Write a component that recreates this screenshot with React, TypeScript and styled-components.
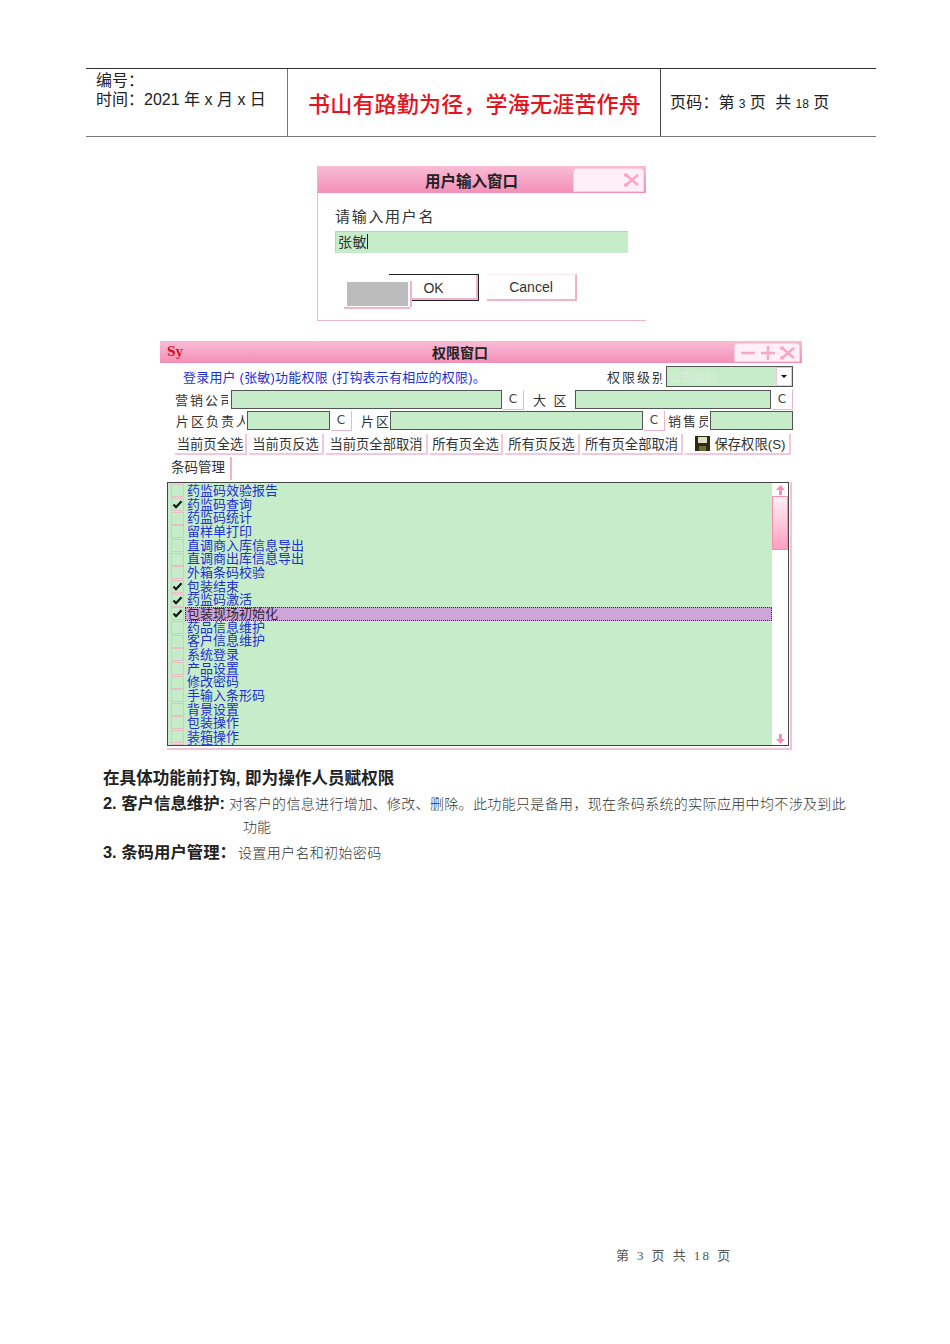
import React from 'react';
import styled, { createGlobalStyle } from 'styled-components';

const GlobalStyle = createGlobalStyle`
  html, body { margin: 0; padding: 0; background: #fff; }
  body { font-family: "Liberation Sans", "Noto Sans CJK SC", sans-serif; }
`;

const PINK = '#efb4cc';
const GREEN = '#c7ecc9';

const Page = styled.div`
  width: 950px;
  height: 1344px;
  box-sizing: border-box;
  padding-top: 68px;
  padding-bottom: 80px;
  display: flex;
  flex-direction: column;
  overflow: hidden;
`;

/* header table */
const HeaderTable = styled.header`
  margin-left: 86px;
  width: 790px;
  height: 69px;
  box-sizing: border-box;
  border-top: 1px solid #333;
  border-bottom: 1.5px solid #777;
  display: grid;
  grid-template-columns: 201px 374px 215px;
  color: #222;
  font-size: 16px;
`;

const HeaderLeft = styled.div`
  padding: 2px 0 0 10px;
  line-height: 19px;
`;

const HeaderMid = styled.div`
  border-left: 1px solid #777;
  border-right: 1px solid #444;
  padding: 21px 0 0 20px;
  color: #e5141c;
  font-size: 22px;
  letter-spacing: 0.2px;
  line-height: 30px;
  font-weight: 500;
  white-space: nowrap;
`;

const HeaderRight = styled.div`
  padding: 24px 0 0 9px;
  line-height: 20px;
  letter-spacing: 0.2px;
  white-space: nowrap;
`;

const Num = styled.span`
  font-size: 12px;
  margin: 0 4px;
`;

/* application windows */
const TitleBar = styled.div<{ $h: number; $size: number; $shift: number }>`
  height: ${(p) => p.$h}px;
  background: linear-gradient(#f8bcd5, #f48fb7);
  box-sizing: border-box;
  padding-right: ${(p) => p.$shift}px;
  display: flex;
  align-items: center;
  justify-content: center;
  position: relative;
  font-size: ${(p) => p.$size}px;
  font-weight: 700;
  color: #222;
`;

const WinButtons = styled.div<{ $w: number }>`
  position: absolute;
  right: 2px;
  top: 2px;
  bottom: 1px;
  width: ${(p) => p.$w}px;
  box-sizing: border-box;
  background: #fff0f7;
  border: 1px solid #f9cfe0;
  border-radius: 4px 4px 0 0;
  display: flex;
  align-items: center;
  justify-content: flex-end;
  gap: 4px;
  padding-right: 3px;
`;

const InputDialog = styled.section`
  margin: 29px 0 0 317px;
  width: 329px;
  height: 155px;
  box-sizing: border-box;
  border-left: 1px solid ${PINK};
  border-bottom: 1.5px solid ${PINK};
`;

const PromptLabel = styled.div`
  margin: 14px 0 0 17px;
  font-size: 15px;
  line-height: 20px;
  letter-spacing: 1.7px;
  color: #333;
`;

const NameInput = styled.div`
  margin: 4px 0 0 17px;
  width: 293px;
  height: 22px;
  box-sizing: border-box;
  background: ${GREEN};
  border-top: 1px solid ${PINK};
  border-left: 1px solid ${PINK};
  padding-left: 2px;
  font-size: 14px;
  letter-spacing: 0.6px;
  line-height: 21px;
  color: #333;
`;

const Caret = styled.span`
  display: inline-block;
  width: 1px;
  height: 15px;
  background: #222;
  vertical-align: -2px;
`;

const DialogButtons = styled.div`
  margin: 21px 0 0 71px;
  display: flex;
  gap: 8px;
  position: relative;
`;

const DialogButton = styled.div<{ $focus?: boolean }>`
  width: 90px;
  height: 27px;
  box-sizing: border-box;
  display: flex;
  align-items: center;
  justify-content: center;
  font-size: 14px;
  color: #333;
  background: #fff;
  border-right: ${(p) => (p.$focus ? '1.5px solid #222' : `2px solid ${PINK}`)};
  border-bottom: ${(p) => (p.$focus ? '1.5px solid #222' : `2px solid ${PINK}`)};
  border-top: ${(p) => (p.$focus ? '1.5px solid #222' : '1px solid #fbeaf1')};
  box-shadow: ${(p) => (p.$focus ? `inset -2px -2px 0 ${PINK}` : 'none')};
`;

const GreyBlock = styled.div`
  position: absolute;
  left: -45px;
  top: 7px;
  width: 66px;
  height: 26px;
  box-sizing: border-box;
  background: #bcbcbc;
  border-style: solid;
  border-color: #fff;
  border-width: 1px 2px 1px 3px;
  box-shadow: 0 2px 0 ${PINK}, 2px 0 0 ${PINK};
`;

const RightsWindow = styled.section`
  margin: 20px 0 0 160px;
  width: 642px;
  height: 409px;
  box-sizing: border-box;
  display: flex;
  flex-direction: column;
`;

const Logo = styled.span`
  position: absolute;
  left: 7px;
  top: 4px;
  font-family: "DejaVu Serif", serif;
  font-size: 12px;
  font-weight: 700;
  color: #d8142c;
`;

const FormRow = styled.div<{ $h: number; $pl: number }>`
  height: ${(p) => p.$h}px;
  padding-left: ${(p) => p.$pl}px;
  display: flex;
  align-items: center;
  flex: none;
`;

const Notice = styled.div`
  width: 432px;
  box-sizing: border-box;
  padding-left: 8px;
  color: #1c2fd6;
  font-size: 13px;
  letter-spacing: 0.2px;
  white-space: nowrap;
`;

const FieldLabel = styled.div<{ $w: number; $ml?: number }>`
  width: ${(p) => p.$w}px;
  margin-left: ${(p) => p.$ml ?? 0}px;
  flex: none;
  overflow: hidden;
  white-space: nowrap;
  font-size: 13px;
  letter-spacing: 2px;
  color: #333;
`;

const FieldInput = styled.div<{ $w: number; $ml?: number }>`
  width: ${(p) => p.$w}px;
  height: 19px;
  margin-left: ${(p) => p.$ml ?? 0}px;
  flex: none;
  box-sizing: border-box;
  background: ${GREEN};
  border: 1px solid #555;
`;

const ClearButton = styled.div`
  width: 21px;
  height: 20px;
  margin-left: 1px;
  flex: none;
  box-sizing: border-box;
  display: flex;
  align-items: center;
  justify-content: center;
  font-family: "DejaVu Sans", sans-serif;
  font-size: 12px;
  color: #444;
  border-right: 1px solid ${PINK};
  border-bottom: 1px solid ${PINK};
`;

const SelectBox = styled.div`
  width: 127px;
  height: 21px;
  margin-left: 4px;
  box-sizing: border-box;
  background: ${GREEN};
  border: 1px solid #555;
  display: flex;
  align-items: center;
  justify-content: space-between;
  font-size: 12px;
  color: #dcefdc;
  padding-left: 2px;
`;

const SelectArrow = styled.div`
  width: 16px;
  height: 19px;
  box-sizing: border-box;
  background: #fff;
  border: 1px solid #f3c4d8;
  display: flex;
  align-items: center;
  justify-content: center;
  &::after {
    content: '';
    border-left: 3px solid transparent;
    border-right: 3px solid transparent;
    border-top: 3px solid #111;
  }
`;

const ToolRow = styled.div`
  height: 21px;
  margin: 3px 0 0 15px;
  display: flex;
  gap: 2px;
  flex: none;
`;

const ToolButton = styled.div<{ $w: number; $pl?: number }>`
  width: ${(p) => p.$w}px;
  padding-left: ${(p) => p.$pl ?? 0}px;
  flex: none;
  box-sizing: border-box;
  display: flex;
  align-items: center;
  justify-content: center;
  gap: 5px;
  font-size: 13.3px;
  color: #333;
  white-space: nowrap;
  border-right: 2px solid #f3c8da;
  border-bottom: 2px solid #f3c8da;
`;

const Tab = styled.div`
  width: 63px;
  height: 23px;
  margin: 2px 0 0 9px;
  padding-left: 2px;
  box-sizing: border-box;
  flex: none;
  border-right: 2px solid ${PINK};
  font-size: 13.5px;
  line-height: 22px;
  color: #333;
`;

const ListFrame = styled.div`
  margin: 2px 0 0 7px;
  width: 625px;
  height: 268px;
  box-sizing: border-box;
  flex: none;
  border-right: 2px solid #f0c4d6;
  border-bottom: 2px solid #f0c4d6;
  padding: 0 1px 2px 0;
`;

const ListBox = styled.div`
  height: 100%;
  box-sizing: border-box;
  border: 1.5px solid #444;
  display: flex;
  overflow: hidden;
`;

const Items = styled.div`
  flex: 1;
  background: ${GREEN};
  padding-top: 1px;
  overflow: hidden;
`;

const Item = styled.div<{ $selected?: boolean }>`
  height: 13.67px;
  display: flex;
  align-items: center;
  padding-left: 3px;
  color: ${(p) => (p.$selected ? '#332233' : '#1c2fd6')};
  font-size: 13px;
  white-space: nowrap;
`;

const Check = styled.div`
  width: 13px;
  height: 13px;
  flex: none;
  box-sizing: border-box;
  border: 1px solid #e3bfc6;
  display: flex;
  align-items: center;
  justify-content: center;
`;

const ItemText = styled.div<{ $selected?: boolean }>`
  flex: 1;
  height: 13.67px;
  margin-left: 1px;
  padding-left: 2px;
  box-sizing: border-box;
  line-height: 13px;
  background: ${(p) => (p.$selected ? '#cda5d8' : 'transparent')};
  outline: ${(p) => (p.$selected ? '1px dotted #333' : 'none')};
  outline-offset: -1px;
`;

const ScrollBar = styled.div`
  width: 16px;
  flex: none;
  background: #fff;
  display: flex;
  flex-direction: column;
  align-items: center;
`;

const ScrollThumb = styled.div`
  width: 100%;
  height: 54px;
  flex: none;
  box-sizing: border-box;
  border: 1px solid #f78fb4;
  background: linear-gradient(#fff0f6, #ff9fc0);
`;

const ScrollGap = styled.div`
  flex: 1;
`;

const ArrowSlot = styled.div`
  height: 13px;
  display: flex;
  align-items: center;
  justify-content: center;
  flex: none;
`;

/* text under the screenshots */
const Notes = styled.div`
  margin: 18px 0 0 103px;
  color: #222;
`;

const NoteHead = styled.div`
  font-size: 16.6px;
  line-height: 22px;
  font-weight: 700;
  white-space: nowrap;
`;

const NoteRow = styled.div<{ $h: number; $mt: number }>`
  height: ${(p) => p.$h}px;
  margin-top: ${(p) => p.$mt}px;
  line-height: ${(p) => p.$h}px;
  white-space: nowrap;
`;

const NoteBold = styled.b<{ $w: number }>`
  display: inline-block;
  width: ${(p) => p.$w}px;
  font-size: 16.4px;
`;

const NoteText = styled.span`
  font-size: 14px;
  letter-spacing: 0.35px;
  font-weight: 300;
  color: #333;
`;

const NoteIndent = styled.div`
  padding-left: 140px;
  margin-top: 1px;
  height: 22px;
  line-height: 22px;
  font-size: 14px;
  font-weight: 300;
  color: #333;
`;

const Footer = styled.footer`
  margin-top: auto;
  margin-left: 616px;
  font-family: "Liberation Serif", "Noto Sans CJK SC", serif;
  font-size: 13px;
  line-height: 16px;
  letter-spacing: 2.4px;
  color: #555;
  white-space: nowrap;
`;

const CloseIcon = () => (
  <svg width="17" height="14" viewBox="0 0 17 14" fill="none" stroke="#f4a9c8" strokeWidth="2.8">
    <path d="M3 2 C7 5 10 8 15 12 M3 12 C7 9 10 6 15 2" />
    <path d="M1 2h4M1 12h4" strokeWidth="3" />
  </svg>
);

const PlusMinus = () => (
  <svg width="34" height="14" viewBox="0 0 34 14" fill="none" stroke="#f4a9c8" strokeWidth="2.6">
    <path d="M0 7h14M20 7h14M27 0v14" />
  </svg>
);

const ScrollArrow = ({ down }: { down?: boolean }) => (
  <svg width="9" height="10" viewBox="0 0 9 10" fill="#f58fb5">
    <path d={down ? 'M3 0h3v5h3L4.5 10 0 5h3z' : 'M4.5 0 9 5H6v5H3V5H0z'} />
  </svg>
);

const SaveIcon = () => (
  <svg width="15" height="15" viewBox="0 0 15 15">
    <rect width="15" height="15" fill="#2d2d16" />
    <rect x="3" y="1" width="9" height="6" fill="#dfe0c8" />
    <rect x="4" y="10" width="7" height="5" fill="#6d6d35" />
  </svg>
);

const CheckMark = () => (
  <svg width="11" height="9" viewBox="0 0 11 9" fill="none" stroke="#111" strokeWidth="2.2">
    <path d="M1.5 4.5 4 7.2 9.5 1.2" />
  </svg>
);

const rights: { name: string; checked?: boolean; selected?: boolean }[] = [
  { name: '药监码效验报告' },
  { name: '药监码查询', checked: true },
  { name: '药监码统计' },
  { name: '留样单打印' },
  { name: '直调商入库信息导出' },
  { name: '直调商出库信息导出' },
  { name: '外箱条码校验' },
  { name: '包装结束', checked: true },
  { name: '药监码激活', checked: true },
  { name: '包装现场初始化', checked: true, selected: true },
  { name: '药品信息维护' },
  { name: '客户信息维护' },
  { name: '系统登录' },
  { name: '产品设置' },
  { name: '修改密码' },
  { name: '手输入条形码' },
  { name: '背景设置' },
  { name: '包装操作' },
  { name: '装箱操作' },
  { name: '装箱结束' },
];

const tools = [
  { label: '当前页全选', w: 72 },
  { label: '当前页反选', w: 75 },
  { label: '当前页全部取消', w: 102 },
  { label: '所有页全选', w: 73 },
  { label: '所有页反选', w: 75 },
  { label: '所有页全部取消', w: 101 },
];

export default function App() {
  return (
    <Page>
      <GlobalStyle />
      <HeaderTable>
        <HeaderLeft>
          编号：
          <br />
          时间：2021 年 x 月 x 日
        </HeaderLeft>
        <HeaderMid>书山有路勤为径，学海无涯苦作舟</HeaderMid>
        <HeaderRight>
          页码：第<Num>3</Num>页&nbsp;&nbsp;共<Num>18</Num>页
        </HeaderRight>
      </HeaderTable>

      <InputDialog>
        <TitleBar $h={27} $size={15.5} $shift={21}>
          用户输入窗口
          <WinButtons $w={71}>
            <CloseIcon />
          </WinButtons>
        </TitleBar>
        <PromptLabel>请输入用户名</PromptLabel>
        <NameInput>
          张敏
          <Caret />
        </NameInput>
        <DialogButtons>
          <DialogButton $focus>OK</DialogButton>
          <DialogButton>Cancel</DialogButton>
          <GreyBlock />
        </DialogButtons>
      </InputDialog>

      <RightsWindow>
        <TitleBar $h={24} $size={14} $shift={42}>
          <Logo>Sy</Logo>
          权限窗口
          <WinButtons $w={66}>
            <PlusMinus />
            <CloseIcon />
          </WinButtons>
        </TitleBar>
        <FormRow $h={26} $pl={15}>
          <Notice>登录用户 (张敏)功能权限 (打钩表示有相应的权限)。</Notice>
          <FieldLabel $w={55}>权限级别</FieldLabel>
          <SelectBox>
            公司级别
            <SelectArrow />
          </SelectBox>
        </FormRow>
        <FormRow $h={21} $pl={15}>
          <FieldLabel $w={53}>营销公司</FieldLabel>
          <FieldInput $w={271} $ml={3} />
          <ClearButton>C</ClearButton>
          <FieldLabel $w={42} $ml={9}>大 区</FieldLabel>
          <FieldInput $w={196} />
          <ClearButton>C</ClearButton>
        </FormRow>
        <FormRow $h={21} $pl={16}>
          <FieldLabel $w={69}>片区负责人</FieldLabel>
          <FieldInput $w={83} $ml={2} />
          <ClearButton>C</ClearButton>
          <FieldLabel $w={29} $ml={9}>片区</FieldLabel>
          <FieldInput $w={253} />
          <ClearButton>C</ClearButton>
          <FieldLabel $w={40} $ml={3}>销售员</FieldLabel>
          <FieldInput $w={83} $ml={2} />
        </FormRow>
        <ToolRow>
          {tools.map((t) => (
            <ToolButton key={t.label} $w={t.w}>
              {t.label}
            </ToolButton>
          ))}
          <ToolButton $w={106} $pl={6}>
            <SaveIcon />
            保存权限(S)
          </ToolButton>
        </ToolRow>
        <Tab>条码管理</Tab>
        <ListFrame>
          <ListBox>
            <Items>
              {rights.map((r) => (
                <Item key={r.name} $selected={r.selected}>
                  <Check>{r.checked && <CheckMark />}</Check>
                  <ItemText $selected={r.selected}>{r.name}</ItemText>
                </Item>
              ))}
            </Items>
            <ScrollBar>
              <ArrowSlot>
                <ScrollArrow />
              </ArrowSlot>
              <ScrollThumb />
              <ScrollGap />
              <ArrowSlot>
                <ScrollArrow down />
              </ArrowSlot>
            </ScrollBar>
          </ListBox>
        </ListFrame>
      </RightsWindow>

      <Notes>
        <NoteHead>在具体功能前打钩, 即为操作人员赋权限</NoteHead>
        <NoteRow $h={24} $mt={1}>
          <NoteBold $w={126}>2. 客户信息维护:</NoteBold>
          <NoteText>对客户的信息进行增加、修改、删除。此功能只是备用，现在条码系统的实际应用中均不涉及到此</NoteText>
        </NoteRow>
        <NoteIndent>功能</NoteIndent>
        <NoteRow $h={28} $mt={0}>
          <NoteBold $w={135}>3. 条码用户管理：</NoteBold>
          <NoteText>设置用户名和初始密码</NoteText>
        </NoteRow>
      </Notes>

      <Footer>第 3 页 共 18 页</Footer>
    </Page>
  );
}
